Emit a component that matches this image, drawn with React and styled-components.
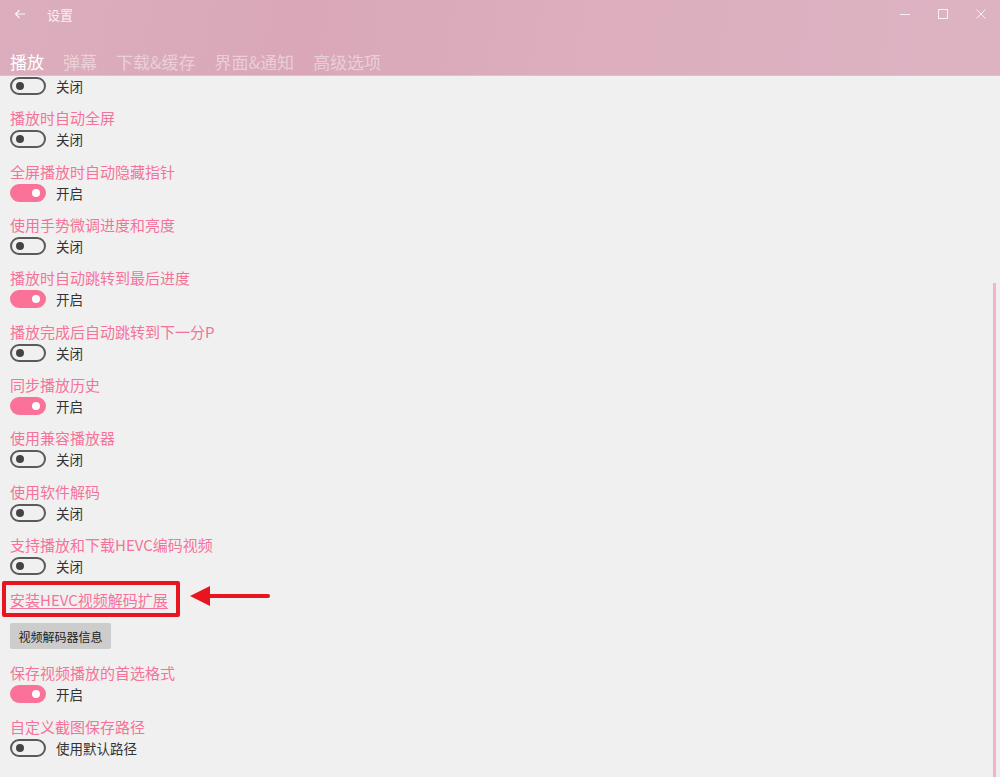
import React from "react";
import styled, { createGlobalStyle } from "styled-components";

const GlobalStyle = createGlobalStyle`
  html, body {
    margin: 0;
    padding: 0;
    background: #f0f0f0;
  }
  body {
    font-family: "Noto Sans CJK SC", "Noto Sans", sans-serif;
  }
`;

const Window = styled.div`
  width: 1000px;
  height: 777px;
  display: flex;
  flex-direction: column;
  background: #f0f0f0;
  overflow: hidden;
`;

const Header = styled.div`
  height: 76px;
  flex-shrink: 0;
  display: flex;
  flex-direction: column;
  background: linear-gradient(100deg, #dcaebd 0%, #d9a7b8 30%, #dcaebe 60%, #ddb3c2 100%);
  border-bottom: 1px solid #e5bccb;
  box-sizing: border-box;
`;

const TitleBar = styled.div`
  height: 28px;
  display: flex;
  align-items: center;
  color: rgba(255, 255, 255, 0.85);
`;

const BackButton = styled.div`
  width: 47px;
  display: flex;
  justify-content: center;
  padding-right: 8px;
  box-sizing: border-box;
`;

const Title = styled.span`
  font-size: 13px;
  flex: 1;
`;

const Controls = styled.div`
  display: flex;
  align-items: center;
`;

const ControlButton = styled.div`
  width: 38px;
  height: 28px;
  display: flex;
  align-items: center;
  justify-content: center;
`;

const Tabs = styled.div`
  display: flex;
  gap: 19px;
  padding: 22px 10px 0;
`;

const Tab = styled.span`
  font-size: 17px;
  line-height: 24px;
  color: ${(p) => (p.$active ? "#ffffff" : "rgba(255, 255, 255, 0.45)")};
`;

const Body = styled.div`
  flex: 1;
  display: flex;
  overflow: hidden;
`;

const List = styled.div`
  flex: 1;
  margin-top: -1px;
  padding-left: 10px;
`;

const Row = styled.div`
  padding-bottom: 11.33px;
`;

const Label = styled.div`
  font-size: 15px;
  line-height: 20px;
  color: #f5739a;
`;

const ToggleLine = styled.div`
  height: 22px;
  display: flex;
  align-items: center;
  gap: 10px;
`;

const Track = styled.span`
  position: relative;
  width: 36px;
  height: 18px;
  box-sizing: border-box;
  border-radius: 9px;
  border: 2px solid ${(p) => (p.$on ? "#fb7299" : "#5a5a5a")};
  background: ${(p) => (p.$on ? "#fb7299" : "transparent")};
`;

const Knob = styled.span`
  position: absolute;
  top: 3px;
  left: ${(p) => (p.$on ? "20px" : "4px")};
  width: 8px;
  height: 8px;
  border-radius: 50%;
  background: ${(p) => (p.$on ? "#ffffff" : "#444")};
`;

const State = styled.span`
  font-size: 13.5px;
  color: #333;
`;

const LinkRow = styled.div`
  position: relative;
  margin-top: 2px;
  height: 20px;
  display: flex;
  align-items: center;
`;

const Link = styled.span`
  font-size: 15px;
  line-height: 20px;
  color: #f5739a;
  text-decoration: underline;
  text-underline-offset: 2px;
`;

const Highlight = styled.span`
  position: absolute;
  left: -8px;
  top: -9px;
  width: 178px;
  height: 36px;
  box-sizing: border-box;
  border: 4px solid #e8141f;
  border-radius: 2px;
`;

const Arrow = styled.svg`
  position: absolute;
  left: 168px;
  top: -8px;
`;

const Button = styled.div`
  margin: 13px 0 14px;
  width: 101px;
  height: 26px;
  display: flex;
  align-items: center;
  justify-content: center;
  background: #cccccc;
  border-radius: 2px;
  font-size: 12px;
  color: #222;
`;

const ScrollTrack = styled.div`
  width: 7px;
  display: flex;
  flex-direction: column;
  padding-top: 207px;
`;

const Thumb = styled.div`
  flex: 1;
  width: 3px;
  background: #f7b3c5;
`;

const Toggle = ({ on, text }) => (
  <ToggleLine>
    <Track $on={on}>
      <Knob $on={on} />
    </Track>
    <State>{text || (on ? "开启" : "关闭")}</State>
  </ToggleLine>
);

const Setting = ({ label, on, text }) => (
  <Row>
    {label && <Label>{label}</Label>}
    <Toggle on={on} text={text} />
  </Row>
);

// the first row is scrolled up under the header: only its toggle shows
const settings = [
  { label: null, on: false },
  { label: "播放时自动全屏", on: false },
  { label: "全屏播放时自动隐藏指针", on: true },
  { label: "使用手势微调进度和亮度", on: false },
  { label: "播放时自动跳转到最后进度", on: true },
  { label: "播放完成后自动跳转到下一分P", on: false },
  { label: "同步播放历史", on: true },
  { label: "使用兼容播放器", on: false },
  { label: "使用软件解码", on: false },
  { label: "支持播放和下载HEVC编码视频", on: false },
];

const tabs = ["播放", "弹幕", "下载&缓存", "界面&通知", "高级选项"];

export default function App() {
  return (
    <Window>
      <GlobalStyle />
      <Header>
        <TitleBar>
          <BackButton>
            <svg width="12" height="10" viewBox="0 0 12 10">
              <path d="M11 5H1.5M5.5 1L1.5 5l4 4" stroke="#fff" strokeOpacity="0.85" strokeWidth="1.2" fill="none" />
            </svg>
          </BackButton>
          <Title>设置</Title>
          <Controls>
            <ControlButton>
              <svg width="10" height="10" viewBox="0 0 10 10">
                <path d="M0 5.5h10" stroke="#fff" strokeOpacity="0.8" strokeWidth="1" />
              </svg>
            </ControlButton>
            <ControlButton>
              <svg width="10" height="10" viewBox="0 0 10 10">
                <rect x="0.5" y="0.5" width="9" height="9" stroke="#fff" strokeOpacity="0.8" strokeWidth="1" fill="none" />
              </svg>
            </ControlButton>
            <ControlButton>
              <svg width="10" height="10" viewBox="0 0 10 10">
                <path d="M0.5 0.5l9 9M9.5 0.5l-9 9" stroke="#fff" strokeOpacity="0.8" strokeWidth="1" />
              </svg>
            </ControlButton>
          </Controls>
        </TitleBar>
        <Tabs>
          {tabs.map((t, i) => (
            <Tab key={t} $active={i === 0}>
              {t}
            </Tab>
          ))}
        </Tabs>
      </Header>
      <Body>
        <List>
          {settings.map((s, i) => (
            <Setting key={i} label={s.label} on={s.on} />
          ))}
          <LinkRow>
            <Link>安装HEVC视频解码扩展</Link>
            <Highlight />
            <Arrow width="96" height="28" viewBox="0 0 96 28">
              <path d="M30 14H90" stroke="#e8141f" strokeWidth="4" strokeLinecap="round" />
              <path d="M12 14L32 4V24Z" fill="#e8141f" />
            </Arrow>
          </LinkRow>
          <Button>视频解码器信息</Button>
          <Setting label="保存视频播放的首选格式" on />
          <Setting label="自定义截图保存路径" on={false} text="使用默认路径" />
        </List>
        <ScrollTrack>
          <Thumb />
        </ScrollTrack>
      </Body>
    </Window>
  );
}
